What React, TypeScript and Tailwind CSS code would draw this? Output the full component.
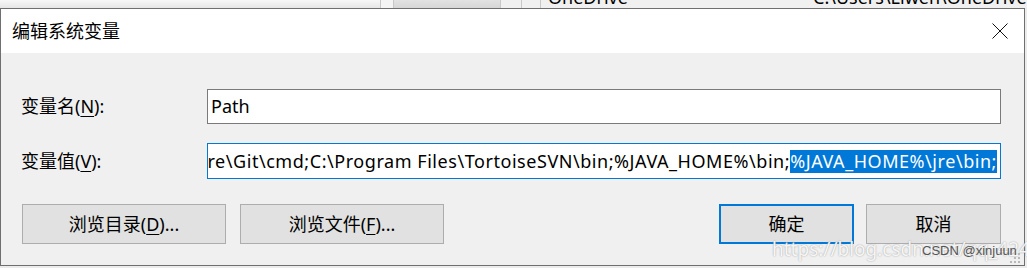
import React from "react";

const font = { fontFamily: '"Noto Sans", "Noto Sans CJK SC", sans-serif' };

// window behind the dialog, only its bottom edge shows above it
const BehindStrip: React.FC = () => (
  <div className="flex h-[8px] overflow-hidden bg-[#f2f2f2]">
    <div className="w-[380px] h-full bg-gradient-to-b from-[#f7f7f7] to-[#e6e6e6]" />
    <div className="w-[13px] h-full border-l border-[#c8c8c8] bg-[#f4f4f4]" />
    <div className="w-[107px] h-full border-l border-[#c8c8c8] bg-gradient-to-b from-[#e2e2e2] to-[#d6d6d6]" />
    <div className="w-[21px] h-full border-l border-[#c8c8c8] bg-[#f0f0f0]" />
    <div className="w-[19px] h-full border-l border-[#c8c8c8] bg-[#f0f0f0]" />
    <div className="flex-1 h-full border-l border-[#c8c8c8] bg-[#f0f0f0] overflow-hidden">
      <div className="flex mt-[-13px] text-[18px] leading-[20px] text-black whitespace-nowrap">
        <span className="pl-[7px] w-[272px]">OneDrive</span>
        <span>C:\Users\Liwen\OneDrive</span>
      </div>
    </div>
  </div>
);

const Underline: React.FC<{ children: React.ReactNode }> = ({ children }) => (
  <span className="underline underline-offset-[3px] decoration-1">{children}</span>
);

const Button: React.FC<{ w: string; primary?: boolean; children: React.ReactNode }> = ({
  w,
  primary,
  children,
}) => (
  <div
    className={`${w} h-[40px] flex items-center justify-center bg-[#e1e1e1] text-[18px] text-black ${
      primary ? "border-2 border-[#0078d7]" : "border border-[#adadad]"
    }`}
  >
    {children}
  </div>
);

const CloseIcon: React.FC = () => (
  <svg width="16" height="16" viewBox="0 0 16 16" className="block">
    <path d="M0.5 0.5 L15.5 15.5 M15.5 0.5 L0.5 15.5" stroke="#111" strokeWidth="1" fill="none" />
  </svg>
);

const Grip: React.FC = () => (
  <svg width="10" height="10" viewBox="0 0 10 10" className="block">
    {[
      [8, 0],
      [4, 4],
      [8, 4],
      [0, 8],
      [4, 8],
      [8, 8],
    ].map(([x, y], i) => (
      <rect key={i} x={x} y={y} width="2" height="2" fill="#b8b8b8" />
    ))}
  </svg>
);

export default function App() {
  return (
    <div className="w-[1027px] h-[268px] overflow-hidden bg-[#ececec]" style={font}>
      <BehindStrip />
      <div className="relative w-[1025px] h-[258px] border border-[#6f6f6f] bg-[#f0f0f0] flex flex-col">
        {/* title bar */}
        <div className="h-[44px] bg-white flex items-center justify-between pl-[11px] pr-[16px]">
          <span className="text-[18px] text-black">编辑系统变量</span>
          <CloseIcon />
        </div>

        {/* body */}
        <div className="flex-1 pt-[36px] pl-[20px]">
          <div className="flex items-center">
            <div className="w-[186px] text-[18px] text-black">
              变量名(<Underline>N</Underline>):
            </div>
            <div className="w-[794px] h-[35px] border border-[#7a7a7a] bg-white flex items-center pl-[3px] text-[18px] text-black">
              Path
            </div>
          </div>

          <div className="flex items-center mt-[19px]">
            <div className="w-[186px] text-[18px] text-black">
              变量值(<Underline>V</Underline>):
            </div>
            <div className="w-[794px] h-[36px] border border-[#0078d7] bg-white flex items-center justify-end pr-[3px] overflow-hidden text-[18px] tracking-[0.55px] text-black whitespace-nowrap">
              <span>C:\Program Files\Software\Git\cmd;C:\Program Files\TortoiseSVN\bin;%JAVA_HOME%\bin;</span>
              <span className="h-[23px] leading-[23px] bg-[#0078d7] text-white">%JAVA_HOME%\jre\bin;</span>
            </div>
          </div>

          <div className="flex mt-[25px] pl-[1px]">
            <Button w="w-[204px]">
              浏览目录(<Underline>D</Underline>)...
            </Button>
            <div className="ml-[14px]">
              <Button w="w-[204px]">
                浏览文件(<Underline>F</Underline>)...
              </Button>
            </div>
            <div className="ml-[275px]">
              <Button w="w-[135px]" primary>
                确定
              </Button>
            </div>
            <div className="ml-[12px]">
              <Button w="w-[135px]">取消</Button>
            </div>
          </div>
        </div>

        {/* csdn watermark over the dialog */}
        <div className="absolute left-[771px] top-[229px] text-[19px] leading-[22px] text-white/90 [text-shadow:0_0_1.5px_#8a8a8a] whitespace-nowrap">
          https://blog.csdn.net/qq_42478773
        </div>
        <div
          className="absolute left-[921px] top-[234px] text-[13px] leading-[16px] text-[#555] whitespace-nowrap"
          style={{ fontFamily: '"Liberation Sans", Arial, sans-serif' }}
        >
          CSDN @xinjuun
        </div>
        <div className="absolute right-[4px] bottom-[2px]">
          <Grip />
        </div>
      </div>
    </div>
  );
}
